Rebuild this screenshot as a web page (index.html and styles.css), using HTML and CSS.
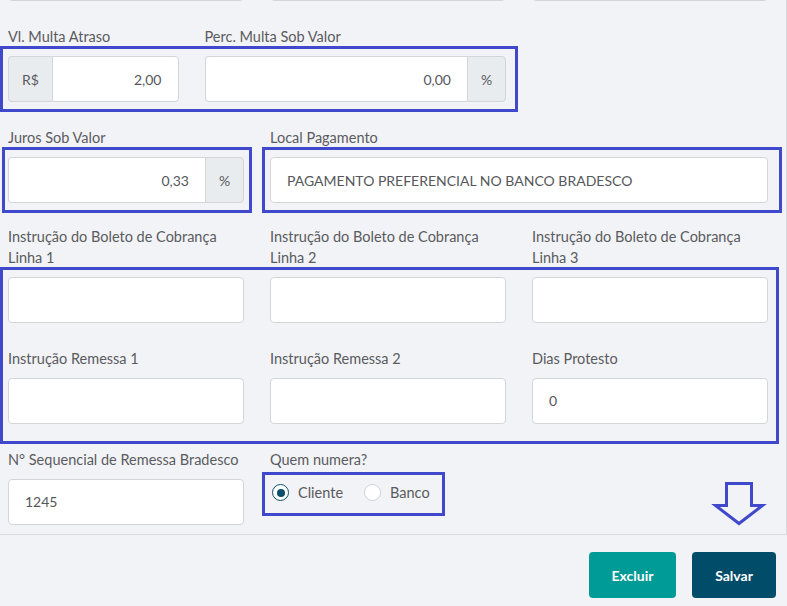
FILE: index.html
```html
<!DOCTYPE html>
<html lang="pt-BR">
<head>
<meta charset="utf-8">
<title>Boleto</title>
<link rel="stylesheet" href="styles.css">
</head>
<body>
<div class="panel">
  <div class="grid">
    <div class="group span4 prev"><input class="field" type="text"></div>
    <div class="group span4 prev"><input class="field" type="text"></div>
    <div class="group span4 prev"><input class="field" type="text"></div>

    <div class="group span3">
      <label class="lbl">Vl. Multa Atraso</label>
      <div class="igroup">
        <span class="addon addon-left">R$</span>
        <input class="field right" type="text" value="2,00">
      </div>
    </div>
    <div class="group span5">
      <label class="lbl">Perc. Multa Sob Valor</label>
      <div class="igroup">
        <input class="field right" type="text" value="0,00">
        <span class="addon addon-right">%</span>
      </div>
    </div>
    <div class="group span4"></div>

    <div class="group span4">
      <label class="lbl">Juros Sob Valor</label>
      <div class="igroup">
        <input class="field right" type="text" value="0,33">
        <span class="addon addon-right">%</span>
      </div>
    </div>
    <div class="group span8">
      <label class="lbl">Local Pagamento</label>
      <input class="field" type="text" value="PAGAMENTO PREFERENCIAL NO BANCO BRADESCO">
    </div>

    <div class="group span4 tight">
      <label class="lbl">Instrução do Boleto de Cobrança<br>Linha 1</label>
      <input class="field" type="text">
    </div>
    <div class="group span4 tight">
      <label class="lbl">Instrução do Boleto de Cobrança<br>Linha 2</label>
      <input class="field" type="text">
    </div>
    <div class="group span4 tight">
      <label class="lbl">Instrução do Boleto de Cobrança<br>Linha 3</label>
      <input class="field" type="text">
    </div>

    <div class="group span4">
      <label class="lbl">Instrução Remessa 1</label>
      <input class="field" type="text">
    </div>
    <div class="group span4">
      <label class="lbl">Instrução Remessa 2</label>
      <input class="field" type="text">
    </div>
    <div class="group span4">
      <label class="lbl">Dias Protesto</label>
      <input class="field" type="text" value="0">
    </div>

    <div class="group span4">
      <label class="lbl">N° Sequencial de Remessa Bradesco</label>
      <input class="field" type="text" value="1245">
    </div>
    <div class="group span4">
      <label class="lbl">Quem numera?</label>
      <div class="radios">
        <span class="radio"><span class="dot checked"></span>Cliente</span>
        <span class="radio"><span class="dot"></span>Banco</span>
      </div>
    </div>
  </div>
</div>

<div class="footer">
  <button class="btn btn-excluir">Excluir</button>
  <button class="btn btn-salvar">Salvar</button>
</div>

<div class="mark mark-row1"></div>
<div class="mark mark-juros"></div>
<div class="mark mark-local"></div>
<div class="mark mark-instr"></div>
<div class="mark mark-radio"></div>
<svg class="arrow" width="60" height="50" viewBox="708 478 60 50">
  <polygon points="726.5,483.5 751.5,483.5 751.5,505.5 762.5,505.5 739,523.5 715.5,505.5 726.5,505.5" fill="none" stroke="#4048cc" stroke-width="3" stroke-linejoin="miter"/>
</svg>
</body>
</html>
```

FILE: styles.css
```css
* { box-sizing: border-box; }

html, body {
  margin: 0;
  padding: 0;
  background: #f2f3f7;
}

body {
  position: relative;
  width: 787px;
  height: 606px;
  overflow: hidden;
  font-family: Lato, "Open Sans", sans-serif;
  font-size: 14px;
  color: #5a5b5e;
}

.panel {
  height: 535px;
  padding: 0 18px 0 8px;
  border-right: 1px solid #d9dadd;
  border-bottom: 1px solid #d9dadd;
  overflow: hidden;
}

.grid {
  width: 760px;
  display: grid;
  grid-template-columns: repeat(12, 1fr);
  column-gap: 26px;
  row-gap: 26px;
  margin-top: -45px;
}

.group { display: flex; flex-direction: column; }
.span3 { grid-column: span 3; }
.span4 { grid-column: span 4; }
.span5 { grid-column: span 5; }
.span8 { grid-column: span 8; }
.tight { margin-top: -2px; }

.lbl {
  display: block;
  font-size: 14.5px;
  line-height: 20.5px;
  margin-bottom: 8.5px;
  color: #5a5b5e;
  white-space: nowrap;
}

.field {
  display: block;
  width: 100%;
  height: 46px;
  margin: 0;
  padding: 0 16px;
  border: 1px solid #d4d5d8;
  border-radius: 4px;
  background: #fff;
  font-family: Lato, "Open Sans", sans-serif;
  font-size: 14px;
  color: #55575b;
  outline: none;
}
.field.right { text-align: right; }

.igroup {
  display: flex;
  height: 46px;
}
.igroup .field {
  flex: 1;
  min-width: 0;
}
.addon {
  display: flex;
  align-items: center;
  justify-content: center;
  background: #e9ecef;
  border: 1px solid #d4d5d8;
  color: #5a5b5e;
}
.addon-left {
  width: 44px;
  border-radius: 4px 0 0 4px;
  border-right: none;
}
.addon-left + .field { border-radius: 0 4px 4px 0; }
.addon-right {
  width: 39px;
  border-radius: 0 4px 4px 0;
}
.igroup .field:first-child {
  border-right: none;
  border-radius: 4px 0 0 4px;
}

.radios {
  display: flex;
  align-items: center;
  gap: 21px;
  height: 28px;
  padding-left: 2px;
  margin-top: 0;
}
.radio {
  display: flex;
  align-items: center;
  gap: 9px;
  color: #5a5b5e;
  font-size: 14.5px;
}
.dot {
  width: 17px;
  height: 17px;
  border-radius: 50%;
  border: 1px solid #cfd1d4;
  background: #fff;
  display: flex;
  align-items: center;
  justify-content: center;
}
.dot.checked {
  border: 1.5px solid #0c4f6c;
}
.dot.checked::after {
  content: "";
  width: 8px;
  height: 8px;
  border-radius: 50%;
  background: #0c4f6c;
}

.footer {
  display: flex;
  justify-content: flex-end;
  gap: 16px;
  padding: 17px 11px 0 0;
}
.btn {
  height: 46px;
  border: none;
  border-radius: 4px;
  color: #fff;
  font-family: Lato, "Open Sans", sans-serif;
  font-size: 14px;
  font-weight: 700;
  padding: 0;
}
.btn-excluir { width: 87px; background: #009b96; }
.btn-salvar { width: 84px; background: #014c69; }

.mark {
  position: absolute;
  border: 3px solid #4048cc;
}
.mark-row1 { left: 0; top: 46px; width: 518px; height: 66px; }
.mark-juros { left: 2px; top: 147px; width: 250px; height: 66px; }
.mark-local { left: 262px; top: 147px; width: 520px; height: 66px; }
.mark-instr { left: 0; top: 267px; width: 779px; height: 177px; }
.mark-radio { left: 262px; top: 472px; width: 183px; height: 44px; }

.arrow {
  position: absolute;
  left: 708px;
  top: 478px;
}
```
